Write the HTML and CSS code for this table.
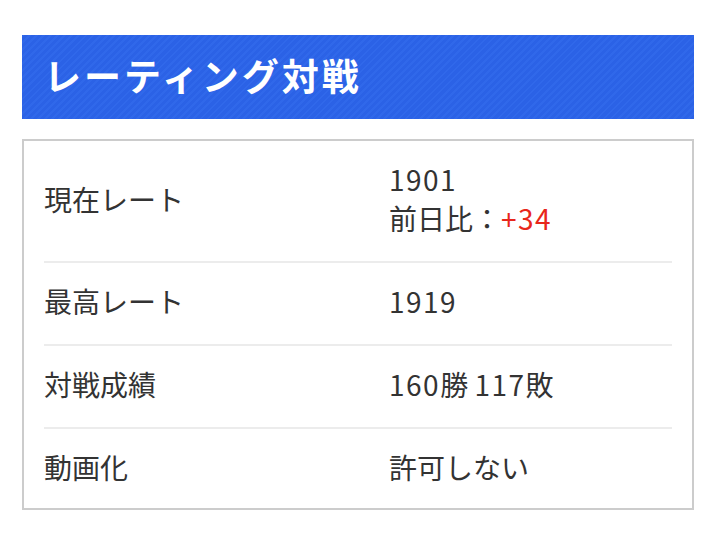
FILE: index.html
```html
<!DOCTYPE html>
<html lang="ja">
<head>
<meta charset="utf-8">
<link rel="stylesheet" href="styles.css">
</head>
<body>
<div class="wrap">
  <h2 class="heading">レーティング対戦</h2>
  <div class="box">
    <div class="row">
      <div class="label">現在レート</div>
      <div class="value"><span class="num">1901</span><br>前日比：<span class="num up">+34</span></div>
    </div>
    <div class="row">
      <div class="label">最高レート</div>
      <div class="value"><span class="num">1919</span></div>
    </div>
    <div class="row">
      <div class="label">対戦成績</div>
      <div class="value"><span class="num">160</span>勝 <span class="num">117</span>敗</div>
    </div>
    <div class="row">
      <div class="label">動画化</div>
      <div class="value">許可しない</div>
    </div>
  </div>
</div>
</body>
</html>
```
FILE: styles.css
```css
html, body {
  margin: 0;
  padding: 0;
  background: #fff;
}
body {
  font-family: "Noto Sans CJK JP", "Noto Sans", sans-serif;
  color: #333;
}
.wrap {
  width: 672px;
  padding: 35px 0 0 22px;
}
.heading {
  margin: 0;
  height: 84px;
  box-sizing: border-box;
  padding: 0 0 4px 22px;
  display: flex;
  align-items: center;
  color: #fff;
  font-size: 37px;
  font-weight: 700;
  letter-spacing: 3px;
  background-color: #2b62e6;
  background-image: repeating-linear-gradient(-45deg, #2b62e6 0, #2b62e6 3px, #3068ea 3px, #3068ea 5px);
}
.box {
  margin-top: 20px;
  border: 2px solid #ccc;
  padding: 0 20px;
}
.row {
  display: flex;
  align-items: center;
  padding: 19px 0 23px;
  border-bottom: 2px solid #ececec;
  font-size: 28px;
  line-height: 39px;
  font-weight: 400;
}
.row:last-child {
  border-bottom: none;
  padding: 19px 0 21px;
}
.label {
  width: 345px;
  flex: none;
}
.value {
  flex: 1;
}
.num {
  letter-spacing: 1.5px;
}
.up {
  color: #e8261b;
}
```
